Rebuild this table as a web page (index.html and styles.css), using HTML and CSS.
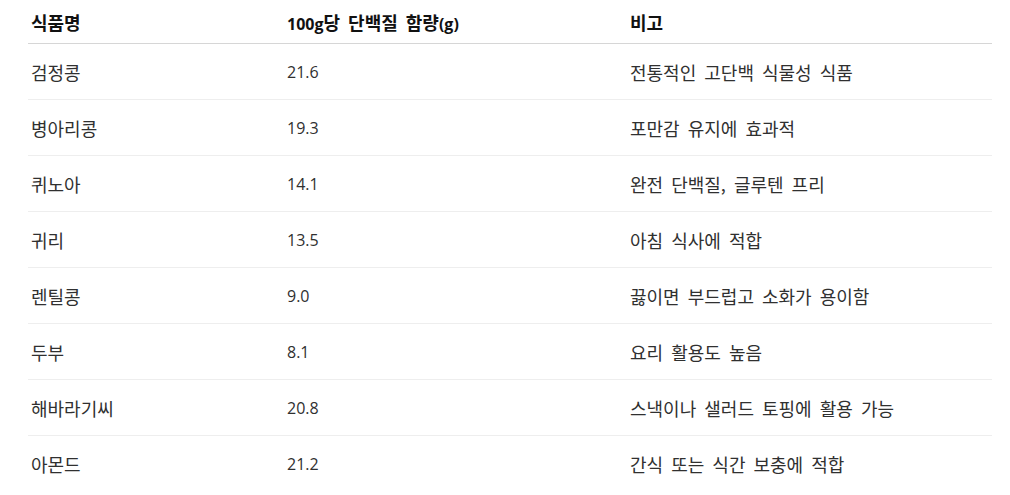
FILE: index.html
```html
<!DOCTYPE html>
<html lang="ko">
<head>
<meta charset="utf-8">
<link rel="stylesheet" href="styles.css">
</head>
<body>
<div class="wrap">
<table class="protein">
<thead>
<tr><th class="c1">식품명</th><th class="c2"><span class="lat">100g</span>당 단백질 함량<span class="lat">(g)</span></th><th class="c3">비고</th></tr>
</thead>
<tbody>
<tr><td>검정콩</td><td class="num">21.6</td><td>전통적인 고단백 식물성 식품</td></tr>
<tr><td>병아리콩</td><td class="num">19.3</td><td>포만감 유지에 효과적</td></tr>
<tr><td>퀴노아</td><td class="num">14.1</td><td>완전 단백질, 글루텐 프리</td></tr>
<tr><td>귀리</td><td class="num">13.5</td><td>아침 식사에 적합</td></tr>
<tr><td>렌틸콩</td><td class="num">9.0</td><td>끓이면 부드럽고 소화가 용이함</td></tr>
<tr><td>두부</td><td class="num">8.1</td><td>요리 활용도 높음</td></tr>
<tr><td>해바라기씨</td><td class="num">20.8</td><td>스낵이나 샐러드 토핑에 활용 가능</td></tr>
<tr><td>아몬드</td><td class="num">21.2</td><td>간식 또는 식간 보충에 적합</td></tr>
</tbody>
</table>
</div>
</body>
</html>
```
FILE: styles.css
```css
html, body {
  margin: 0;
  padding: 0;
  background: #ffffff;
}
.wrap {
  padding: 0 18px 0 28px;
}
.protein {
  width: 964px;
  border-collapse: collapse;
  table-layout: fixed;
  font-family: "Noto Sans CJK KR", "Open Sans", sans-serif;
  font-size: 18px;
  word-spacing: 3px;
  color: #303030;
}
.c1 { width: 250px; }
.c2 { width: 337px; }
.c3 { width: auto; }
.protein th {
  height: 43px;
  padding: 0 3px;
  text-align: left;
  font-weight: 700;
  color: #111111;
  border-bottom: 1px solid #d6d6d6;
  vertical-align: middle;
  white-space: nowrap;
}
.protein td {
  height: 55px;
  padding: 0 3px;
  text-align: left;
  border-bottom: 1px solid #eeeeee;
  vertical-align: middle;
  white-space: nowrap;
}
.protein tbody tr:last-child td {
  border-bottom: none;
}
.protein .lat,
.protein .num {
  font-family: "Open Sans", "Noto Sans", sans-serif;
  font-size: 16px;
  word-spacing: 0;
}
```
